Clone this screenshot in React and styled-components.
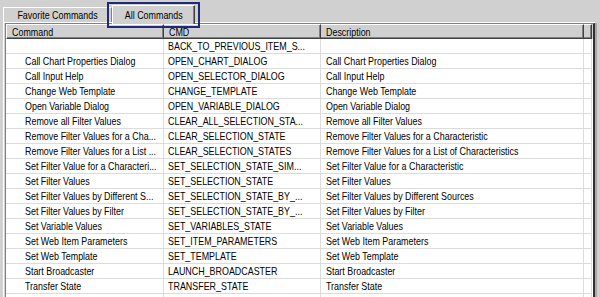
import React from 'react'
import styled, { createGlobalStyle, css } from 'styled-components'

const GlobalStyle = createGlobalStyle`
  html, body {
    margin: 0;
    padding: 0;
    background: #d0d0d0;
  }
  body {
    font-family: "Liberation Sans", Arial, sans-serif;
    font-size: 11px;
    color: #000;
  }
`;

const cols = '158px 157px 263px 8px';

const Window = styled.div`
width: 600px;
height: 297px;
overflow: hidden;
background: #d0d0d0;
display: flex;
flex-direction: column;
`;

// the original UI font is a narrow bitmap sans; squeeze Liberation Sans to its width
const Label = styled.span`
display: inline-block;
white-space: nowrap;
transform: scaleX(0.81);
transform-origin: ${({ $center }) => ($center ? 'center' : 'left')} center;
`;

const TabStrip = styled.div`
flex-shrink: 0;
display: flex;
align-items: flex-end;
height: 22px;
padding-left: 3px;
position: relative;
z-index: 2;
`;

const Tab = styled.div`
box-sizing: border-box;
display: flex;
align-items: center;
justify-content: center;
height: 15px;
width: 109px;
border-top: 1px solid #fff;
border-left: 1px solid #fff;
border-right: 1px solid #808080;
background: #d0d0d0;
padding-bottom: 1px;
position: relative;

${({ $active }) => $active && css`
  height: 19px;
  width: 83px;
  margin-bottom: -2px;
  padding-bottom: 0;
  border-right: 1px solid #404040;
  box-shadow: inset -1px 0 0 #808080;

  &::after {
    content: '';
    position: absolute;
    left: -6px;
    right: -6px;
    top: -4px;
    bottom: -4px;
    border: 2px solid #1c2a78;
  }
`}
`;

const Panel = styled.div`
flex: 1;
min-height: 0;
margin-left: 3px;
margin-right: 5px;
border-top: 1px solid #fff;
border-left: 1px solid #fff;
padding-left: 1px;
display: flex;
`;

const List = styled.div`
flex: 1;
border-left: 1px solid #808080;
border-top: 1px solid #808080;
border-right: 2px solid #303030;
box-shadow: 2px 0 0 #a8a8a8;
background: #fff;
overflow: hidden;
`;

const HeaderRow = styled.div`
display: grid;
grid-template-columns: ${cols};
height: 15px;
background: #d0d0d0;
`;

const HeaderCell = styled.div`
box-sizing: border-box;
padding-left: 5px;
padding-top: 1px;
line-height: 13px;
border-top: 1px solid #fff;
border-left: ${({ $first }) => ($first ? '1px solid #fff' : 'none')};
border-right: 1px solid #404040;
border-bottom: 1px solid #404040;
box-shadow: inset -1px -1px 0 #808080;
overflow: hidden;
`;

const Row = styled.div`
display: grid;
grid-template-columns: ${cols};
height: 15px;
`;

const Cell = styled.div`
box-sizing: border-box;
padding-left: ${({ $indent }) => $indent}px;
line-height: 15px;
border-bottom: 1px solid #dcdcdc;
border-right: 1px solid #dcdcdc;
overflow: hidden;
`;

const rows = [
  ['', 'BACK_TO_PREVIOUS_ITEM_S...', ''],
  ['Call Chart Properties Dialog', 'OPEN_CHART_DIALOG', 'Call Chart Properties Dialog'],
  ['Call Input Help', 'OPEN_SELECTOR_DIALOG', 'Call Input Help'],
  ['Change Web Template', 'CHANGE_TEMPLATE', 'Change Web Template'],
  ['Open Variable Dialog', 'OPEN_VARIABLE_DIALOG', 'Open Variable Dialog'],
  ['Remove all Filter Values', 'CLEAR_ALL_SELECTION_STA...', 'Remove all Filter Values'],
  ['Remove Filter Values for a Cha...', 'CLEAR_SELECTION_STATE', 'Remove Filter Values for a Characteristic'],
  ['Remove Filter Values for a List ...', 'CLEAR_SELECTION_STATES', 'Remove Filter Values for a List of Characteristics'],
  ['Set Filter Value for a Characteri...', 'SET_SELECTION_STATE_SIM...', 'Set Filter Value for a Characteristic'],
  ['Set Filter Values', 'SET_SELECTION_STATE', 'Set Filter Values'],
  ['Set Filter Values by Different S...', 'SET_SELECTION_STATE_BY_...', 'Set Filter Values by Different Sources'],
  ['Set Filter Values by Filter', 'SET_SELECTION_STATE_BY_...', 'Set Filter Values by Filter'],
  ['Set Variable Values', 'SET_VARIABLES_STATE', 'Set Variable Values'],
  ['Set Web Item Parameters', 'SET_ITEM_PARAMETERS', 'Set Web Item Parameters'],
  ['Set Web Template', 'SET_TEMPLATE', 'Set Web Template'],
  ['Start Broadcaster', 'LAUNCH_BROADCASTER', 'Start Broadcaster'],
  ['Transfer State', 'TRANSFER_STATE', 'Transfer State'],
  ['', '', ''],
];

export default function App() {
  return (
    <Window>
      <GlobalStyle />
      <TabStrip>
        <Tab><Label $center>Favorite Commands</Label></Tab>
        <Tab $active><Label $center>All Commands</Label></Tab>
      </TabStrip>
      <Panel>
        <List>
          <HeaderRow>
            <HeaderCell $first><Label>Command</Label></HeaderCell>
            <HeaderCell><Label>CMD</Label></HeaderCell>
            <HeaderCell><Label>Description</Label></HeaderCell>
            <HeaderCell />
          </HeaderRow>
          {rows.map((r, i) => (
            <Row key={i}>
              <Cell $indent={19}><Label>{r[0]}</Label></Cell>
              <Cell $indent={4}><Label>{r[1]}</Label></Cell>
              <Cell $indent={5}><Label>{r[2]}</Label></Cell>
              <Cell $indent={0} />
            </Row>
          ))}
        </List>
      </Panel>
    </Window>
  )
}
